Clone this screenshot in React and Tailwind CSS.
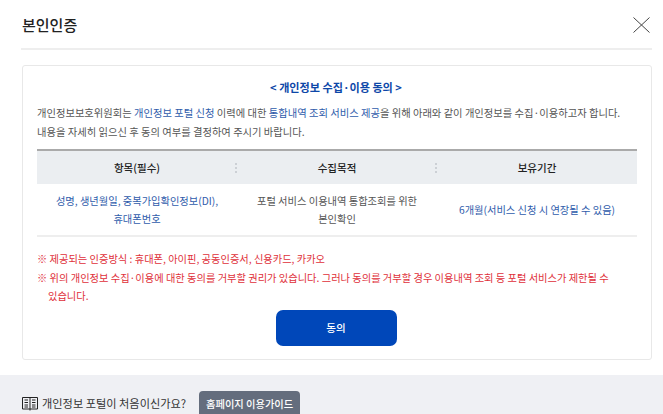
const font = { fontFamily: '"Noto Sans CJK KR", "Noto Sans", sans-serif' };

function HeadCell({ children, last }) {
  return (
    <div className="relative flex-1 flex items-center justify-center text-[10.500px] font-medium text-[#222]">
      {children}
      {!last && <span className="absolute right-0 top-[12px] h-[10px] border-r-2 border-dotted border-[#ccd0d5]" />}
    </div>
  );
}

function BookIcon() {
  return (
    <svg width="16" height="14" viewBox="0 0 16 14" fill="none" stroke="#222" strokeWidth="1">
      <path d="M.5 .5h15v11.500h-15z" />
      <path d="M8 .5v13M2.500 3h3.500M2.500 5.500h3.500M2.500 8h3.500M2.500 10h3.500M10 3h3.500M10 5.500h3.500M10 8h3.500M10 10h3.500" />
    </svg>
  );
}

function CloseIcon() {
  return (
    <svg width="17" height="16" viewBox="0 0 17 16" fill="none" stroke="#444" strokeWidth="1">
      <path d="M.5 .5l16 15M16.500 .5l-16 15" />
    </svg>
  );
}

export default function App() {
  return (
    <div className="h-screen w-full overflow-hidden bg-white flex flex-col" style={font}>
      <div className="pl-[22px] pr-[11px]">
        <header className="h-[50px] flex items-center justify-between border-b-2 border-[#eeeeee] pt-[2px] -ml-px">
          <h1 className="text-[15px] font-medium text-[#222] ml-px">본인인증</h1>
          <div className="mr-[2px]"><CloseIcon /></div>
        </header>
        <section className="mt-[15px] h-[295px] border border-[#e8e8e8] rounded-[3px] px-[14px]">
          <h2 className="mt-[13px] h-[16px] leading-[16px] text-center text-[11.100px] font-bold text-[#0d47a8] -translate-x-px">&lt; 개인정보 수집·이용 동의 &gt;</h2>
          <p className="mt-[9px] text-[10.300px] leading-[18.500px] text-[#555] whitespace-nowrap">
            개인정보보호위원회는 <span className="text-[#2f5cab]">개인정보 포털 신청</span> 이력에 대한 <span className="text-[#2f5cab]">통합내역 조회 서비스 제공</span>을 위해 아래와 같이 개인정보를 수집·이용하고자 합니다.
            <br />
            내용을 자세히 읽으신 후 동의 여부를 결정하여 주시기 바랍니다.
          </p>
          <div className="mt-[8px] border-t-2 border-[#aaaaaa]">
            <div className="flex h-[33px] bg-[#ebeef1]">
              <HeadCell>항목(필수)</HeadCell>
              <HeadCell>수집목적</HeadCell>
              <HeadCell last>보유기간</HeadCell>
            </div>
            <div className="flex h-[53px] border-b-2 border-[#eeeeee] text-[10.250px] leading-[18px] text-center">
              <div className="flex-1 flex items-center justify-center text-[#2f5cab]">
                <span>성명, 생년월일, 중복가입확인정보(DI),<br />휴대폰번호</span>
              </div>
              <div className="flex-1 flex items-center justify-center text-[#555]">
                <span>포털 서비스 이용내역 통합조회를 위한<br />본인확인</span>
              </div>
              <div className="flex-1 flex items-center justify-center text-[#2f5cab]">
                6개월(서비스 신청 시 연장될 수 있음)
              </div>
            </div>
          </div>
          <ul className="mt-[13px] text-[10.250px] leading-[18.500px] text-[#e0303a]">
            <li className="pl-[11px] -indent-[11px]">※ 제공되는 인증방식 : 휴대폰, 아이핀, 공동인증서, 신용카드, 카카오</li>
            <li className="pl-[11px] -indent-[11px]">※ 위의 개인정보 수집·이용에 대한 동의를 거부할 권리가 있습니다. 그러나 동의를 거부할 경우 이용내역 조회 등 포털 서비스가 제한될 수<br />있습니다.</li>
          </ul>
          <div className="mt-[4px] flex justify-center -translate-x-px">
            <button className="w-[121px] h-[36px] rounded-[7px] bg-[#0047b9] text-white text-[10.500px] font-medium">동의</button>
          </div>
        </section>
      </div>
      <footer className="mt-[15px] flex-1 bg-[#eff0f4] px-[22px] pt-[16px] flex items-start gap-[4px]">
        <div className="mt-[6px]"><BookIcon /></div>
        <span className="text-[11.200px] leading-[24px] text-[#333]">개인정보 포털이 처음이신가요?</span>
        <button className="ml-[9px] w-[101px] h-[26px] rounded-[4px] bg-[#646d7d] text-white text-[10.250px] font-medium">홈페이지 이용가이드</button>
      </footer>
    </div>
  );
}
